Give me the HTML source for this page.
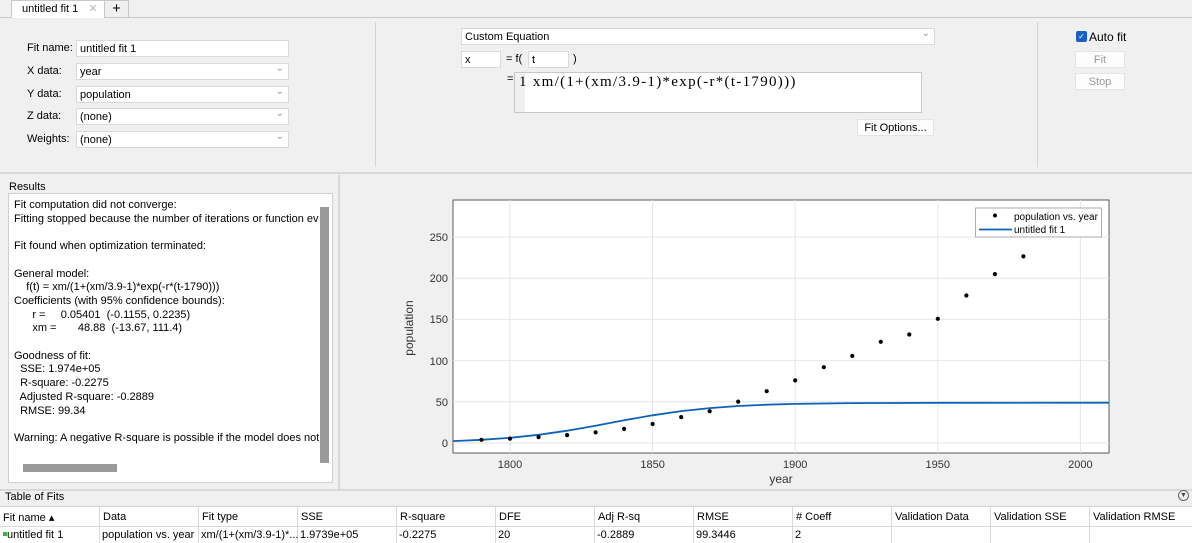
<!DOCTYPE html>
<html><head><meta charset="utf-8"><style>
*{box-sizing:border-box;margin:0;padding:0}
body{width:1192px;height:543px;background:#f0f0f0;font-family:"Liberation Sans",sans-serif;font-size:11px;color:#000;position:relative;overflow:hidden}
.a{position:absolute}
.inp{position:absolute;background:#fff;border:1px solid #d9d9d9;height:17px;padding:1px 3px;line-height:14px;font-size:11px}
.dd::after{content:"⌄";position:absolute;right:4px;top:-2px;color:#999;font-size:10px}
.lbl{position:absolute;font-size:11px}
.btn{position:absolute;background:#fdfdfd;border:1px solid #e4e4e4;text-align:center;line-height:16px;height:17px}
.col{position:absolute;top:0;height:100%;border-left:1px solid #d8d8d8}
.row span{position:absolute;padding-left:3px}
</style></head><body>
<div class="a" style="left:0;top:0;width:1192px;height:18px;background:#f0f0f0;border-bottom:1px solid #c8c8c8"></div>
<div class="a" style="left:11px;top:0;width:94px;height:18px;background:#fff;border:1px solid #c8c8c8;border-bottom:none;padding:1px 0 0 10px">untitled fit 1 <span style="color:#bbb;margin-left:7px">✕</span></div>
<div class="a" style="left:105px;top:0;width:24px;height:18px;border:1px solid #c8c8c8;border-left:none;font-size:15px;text-align:center;line-height:16px">+</div>
<div class="a" style="left:375px;top:22px;height:145px;border-left:1px solid #d4d4d4"></div>
<div class="a" style="left:1037px;top:22px;height:145px;border-left:1px solid #d4d4d4"></div>
<div class="a" style="left:0;top:172px;width:1192px;border-top:2px solid #d8d8d8"></div>
<div class="lbl" style="left:27px;top:42px">Fit name:</div><div class="inp" style="left:76px;top:40px;width:213px">untitled fit 1</div>
<div class="lbl" style="left:27px;top:65px">X data:</div><div class="inp dd" style="left:76px;top:63px;width:213px">year</div>
<div class="lbl" style="left:27px;top:88px">Y data:</div><div class="inp dd" style="left:76px;top:86px;width:213px">population</div>
<div class="lbl" style="left:27px;top:110px">Z data:</div><div class="inp dd" style="left:76px;top:108px;width:213px">(none)</div>
<div class="lbl" style="left:27px;top:133px">Weights:</div><div class="inp dd" style="left:76px;top:131px;width:213px">(none)</div>

<div class="inp dd" style="left:461px;top:28px;width:474px">Custom Equation</div>
<div class="inp" style="left:461px;top:51px;width:40px">x</div>
<div class="lbl" style="left:506px;top:53px">= f(</div>
<div class="inp" style="left:528px;top:51px;width:41px">t</div>
<div class="lbl" style="left:573px;top:53px">)</div>
<div class="lbl" style="left:507px;top:73px">=</div>
<div class="a" style="left:514px;top:72px;width:408px;height:41px;background:#fff;border:1px solid #c8c8c8"><div class="a" style="left:0;top:0;width:10px;height:39px;background:#f0f0f0"></div><div class="a" style="left:4px;top:1px;font-family:'Liberation Serif','Noto Serif CJK SC',serif;font-size:15px;letter-spacing:1.3px">1 xm/(1+(xm/3.9-1)*exp(-r*(t-1790)))</div></div>
<div class="btn" style="left:857px;top:119px;width:77px">Fit Options...</div>
<div class="a" style="left:1076px;top:31px;width:11px;height:11px;background:#1a5fc4;border-radius:2px;color:#fff;font-size:8px;line-height:11px;text-align:center">✓</div>
<div class="lbl" style="left:1089px;top:30px;font-size:12px">Auto fit</div>
<div class="btn" style="left:1075px;top:51px;width:50px;color:#999">Fit</div>
<div class="btn" style="left:1075px;top:73px;width:50px;color:#999">Stop</div>

<div class="lbl" style="left:9px;top:181px">Results</div>
<div class="a" style="left:8px;top:193px;width:325px;height:290px;background:#fff;border:1px solid #d0d0d0"></div>
<div class="a" style="left:9px;top:194px;width:310px;height:270px;overflow:hidden;line-height:13.7px;padding:5px 0 0 5px;white-space:pre">Fit computation did not converge:
Fitting stopped because the number of iterations or function evaluations exceeded

Fit found when optimization terminated:

General model:
    f(t) = xm/(1+(xm/3.9-1)*exp(-r*(t-1790)))
Coefficients (with 95% confidence bounds):
      r =     0.05401  (-0.1155, 0.2235)
      xm =       48.88  (-13.67, 111.4)

Goodness of fit:
  SSE: 1.974e+05
  R-square: -0.2275
  Adjusted R-square: -0.2889
  RMSE: 99.34

Warning: A negative R-square is possible if the model does not contain a constant</div>
<div class="a" style="left:320px;top:207px;width:9px;height:256px;background:#9a9a9a"></div>
<div class="a" style="left:23px;top:464px;width:94px;height:8px;background:#9a9a9a"></div>
<div class="a" style="left:338px;top:175px;height:314px;border-left:2px solid #d8d8d8"></div>

<svg class="a" style="left:340px;top:175px" width="852" height="314" viewBox="340 175 852 314">
<rect x="453" y="200" width="656" height="253" fill="#fff" stroke="#333" stroke-width="0.8"/>
<g stroke="#e6e6e6" stroke-width="1">
<line x1="510" y1="200" x2="510" y2="453"/><line x1="652.6" y1="200" x2="652.6" y2="453"/><line x1="795.2" y1="200" x2="795.2" y2="453"/><line x1="937.8" y1="200" x2="937.8" y2="453"/><line x1="1080.4" y1="200" x2="1080.4" y2="453"/>
<line x1="453" y1="443" x2="1109" y2="443"/><line x1="453" y1="401.8" x2="1109" y2="401.8"/><line x1="453" y1="360.6" x2="1109" y2="360.6"/><line x1="453" y1="319.4" x2="1109" y2="319.4"/><line x1="453" y1="278.2" x2="1109" y2="278.2"/><line x1="453" y1="237" x2="1109" y2="237"/>
</g>
<g font-size="11" fill="#333" font-family="Liberation Sans" text-anchor="end">
<text x="448" y="447">0</text><text x="448" y="406">50</text><text x="448" y="365">100</text><text x="448" y="323">150</text><text x="448" y="282">200</text><text x="448" y="241">250</text></g>
<g font-size="11" fill="#333" font-family="Liberation Sans" text-anchor="middle">
<text x="510" y="468">1800</text><text x="652.6" y="468">1850</text><text x="795.2" y="468">1900</text><text x="937.8" y="468">1950</text><text x="1080.4" y="468">2000</text>
<text x="781" y="483" font-size="12">year</text>
<text transform="translate(413,328) rotate(-90)" font-size="12">population</text></g>
<polyline fill="none" stroke="#0e62b8" stroke-width="1.8" points="453,441.1 481.5,439.8 510,437.8 538.6,434.8 567.1,430.7 595.6,425.7 624.1,420.3 652.6,415.3 681.2,411.1 709.7,408.1 738.2,406 766.7,404.7 795.2,403.9 852.3,403.1 937.8,402.8 1109,402.7"/>
<g fill="#000">
<circle cx="481.5" cy="439.8" r="2.1"/><circle cx="510" cy="438.6" r="2.1"/><circle cx="538.6" cy="437.1" r="2.1"/><circle cx="567.1" cy="435.1" r="2.1"/><circle cx="595.6" cy="432.4" r="2.1"/><circle cx="624.1" cy="428.9" r="2.1"/><circle cx="652.6" cy="424" r="2.1"/><circle cx="681.2" cy="417.1" r="2.1"/><circle cx="709.7" cy="411.2" r="2.1"/><circle cx="738.2" cy="401.6" r="2.1"/><circle cx="766.7" cy="391.2" r="2.1"/><circle cx="795.2" cy="380.4" r="2.1"/><circle cx="823.8" cy="367.2" r="2.1"/><circle cx="852.3" cy="355.9" r="2.1"/><circle cx="880.8" cy="341.8" r="2.1"/><circle cx="909.3" cy="334.5" r="2.1"/><circle cx="937.8" cy="318.8" r="2.1"/><circle cx="966.4" cy="295.5" r="2.1"/><circle cx="994.9" cy="274.1" r="2.1"/><circle cx="1023.4" cy="256.4" r="2.1"/>
</g>
<rect x="975.5" y="208" width="126" height="29" fill="#fff" stroke="#999" stroke-width="0.8"/>
<circle cx="995" cy="215.5" r="2" fill="#000"/>
<line x1="979" y1="229.5" x2="1012" y2="229.5" stroke="#0e62b8" stroke-width="1.8"/>
<text x="1014" y="220" font-size="10" font-family="Liberation Sans">population vs. year</text>
<text x="1014" y="233" font-size="10" font-family="Liberation Sans">untitled fit 1</text>
</svg>

<div class="a" style="left:0;top:489px;width:1192px;border-top:2px solid #d8d8d8"></div>
<div class="lbl" style="left:5px;top:491px">Table of Fits</div>
<div class="a" style="left:1178px;top:490px;width:11px;height:11px;border:1px solid #666;border-radius:50%;font-size:7px;line-height:9px;text-align:center;color:#444">▼</div>
<div class="a" style="left:0;top:506px;width:1192px;height:37px;background:#fff;border-top:1px solid #d0d0d0">
<div class="a" style="left:0;top:19px;width:1192px;border-top:1px solid #d8d8d8"></div>
<div class="col" style="left:99px"></div><div class="col" style="left:198px"></div><div class="col" style="left:297px"></div><div class="col" style="left:396px"></div><div class="col" style="left:495px"></div><div class="col" style="left:594px"></div><div class="col" style="left:693px"></div><div class="col" style="left:792px"></div><div class="col" style="left:891px"></div><div class="col" style="left:990px"></div><div class="col" style="left:1089px"></div>
<div class="row a" style="top:4px;left:0;width:100%"><span style="left:0">Fit name ▴</span><span style="left:100px">Data</span><span style="left:199px">Fit type</span><span style="left:298px">SSE</span><span style="left:397px">R-square</span><span style="left:496px">DFE</span><span style="left:595px">Adj R-sq</span><span style="left:694px">RMSE</span><span style="left:793px"># Coeff</span><span style="left:892px">Validation Data</span><span style="left:991px">Validation SSE</span><span style="left:1090px">Validation RMSE</span></div>
<div class="row a" style="top:22px;left:0;width:100%"><span style="left:0"><b style="display:inline-block;width:4px;height:4px;background:#3cb43c;vertical-align:2px"></b>untitled fit 1</span><span style="left:99px">population vs. year</span><span style="left:198px">xm/(1+(xm/3.9-1)*...</span><span style="left:297px">1.9739e+05</span><span style="left:396px">-0.2275</span><span style="left:495px">20</span><span style="left:594px">-0.2889</span><span style="left:693px">99.3446</span><span style="left:792px">2</span></div>
</div>
</body></html>
